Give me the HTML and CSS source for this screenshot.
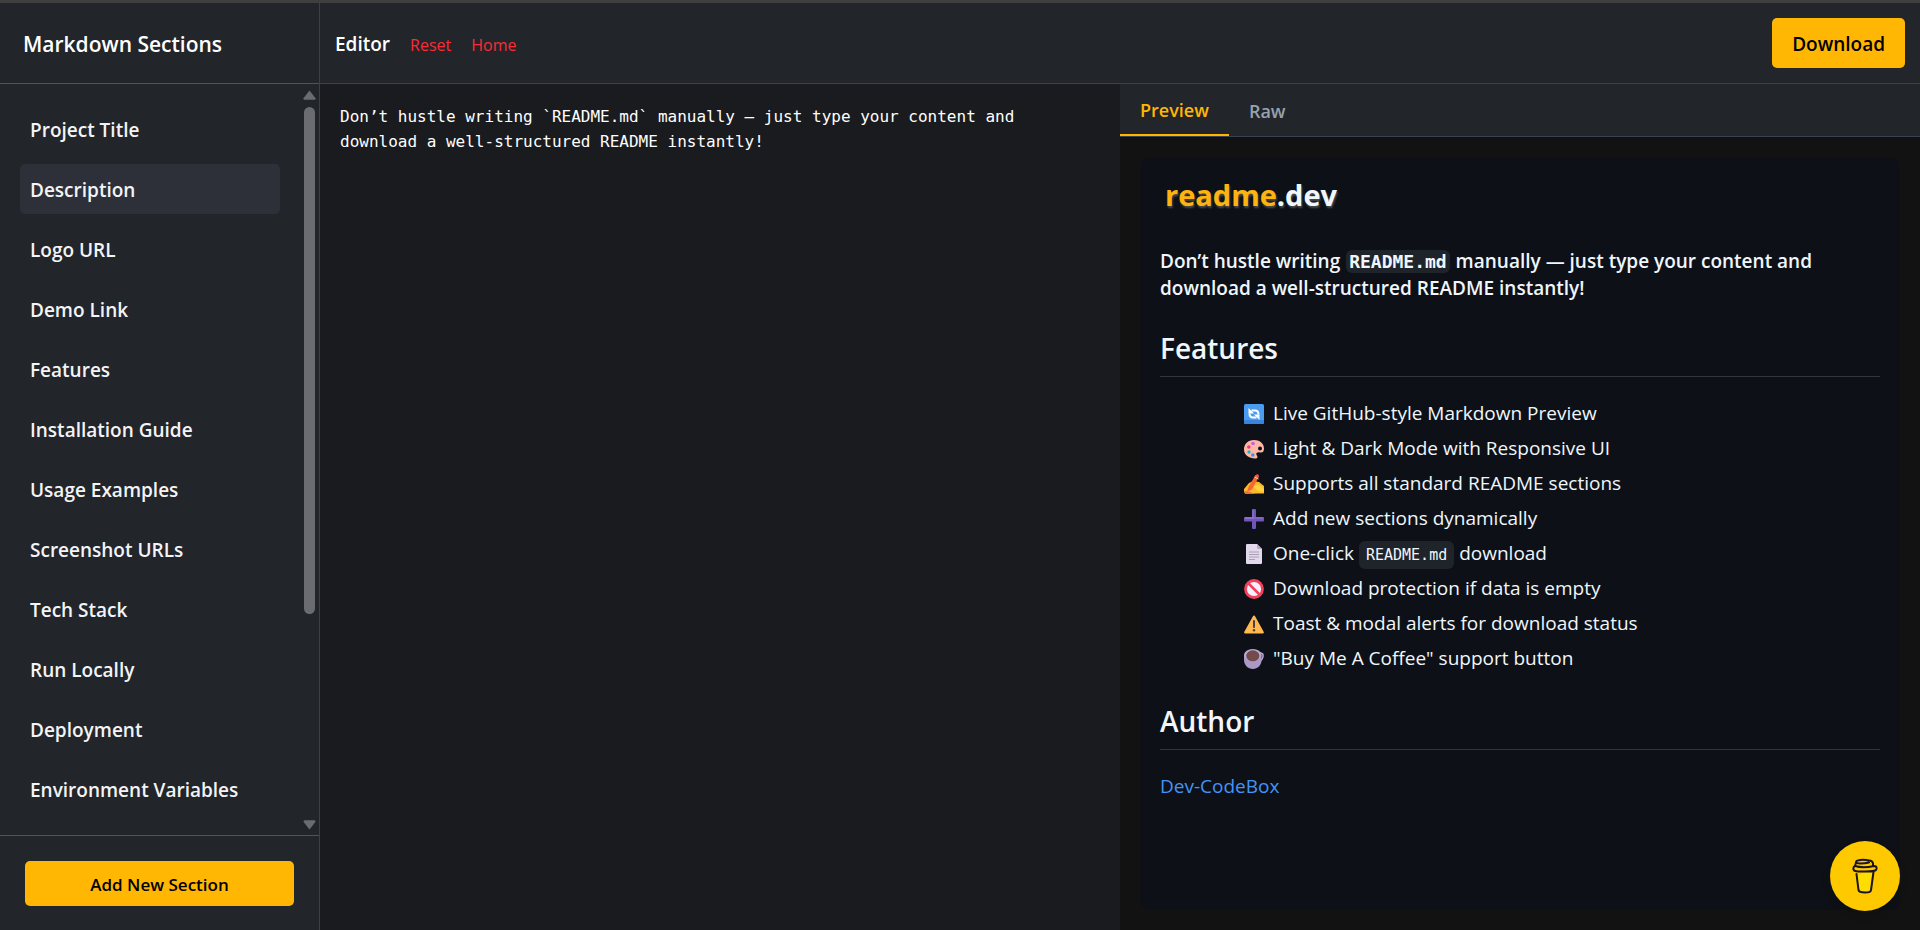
FILE: index.html
```html
<!DOCTYPE html>
<html lang="en">
<head>
<meta charset="utf-8">
<title>readme.dev – Markdown Editor</title>
<link rel="stylesheet" href="styles.css">
</head>
<body>
<div class="app">
  <aside class="sidebar">
    <h1 class="sidebar-title">Markdown Sections</h1>
    <div class="section-area">
      <nav class="section-list" aria-label="Sections">
        <button class="section-item">Project Title</button>
        <button class="section-item active">Description</button>
        <button class="section-item">Logo URL</button>
        <button class="section-item">Demo Link</button>
        <button class="section-item">Features</button>
        <button class="section-item">Installation Guide</button>
        <button class="section-item">Usage Examples</button>
        <button class="section-item">Screenshot URLs</button>
        <button class="section-item">Tech Stack</button>
        <button class="section-item">Run Locally</button>
        <button class="section-item">Deployment</button>
        <button class="section-item">Environment Variables</button>
      </nav>
      <div class="scrollbar" aria-hidden="true">
        <svg width="13" height="10" viewBox="0 0 13 10"><path d="M6.500 0.500L12.500 8.200Q12.500 9.800 11.500 9.800H1.500Q0.500 9.800 0.500 8.200Z"/></svg>
        <div class="track"><div class="thumb"></div></div>
        <svg width="13" height="10" viewBox="0 0 13 10"><path d="M6.500 9.500L12.500 1.800Q12.500 0.200 11.500 0.200H1.500Q0.500 0.200 0.500 1.800Z"/></svg>
      </div>
    </div>
    <div class="sidebar-footer">
      <button class="add-button">Add New Section</button>
    </div>
  </aside>

  <main class="workspace">
    <header class="toolbar">
      <h2 class="toolbar-title">Editor</h2>
      <button class="toolbar-link">Reset</button>
      <a class="toolbar-link" href="#home">Home</a>
      <button class="download-button">Download</button>
    </header>
    <div class="panes">
      <textarea class="editor" aria-label="Section content" spellcheck="false">Don’t hustle writing `README.md` manually — just type your content and download a well-structured README instantly!</textarea>
      <section class="output">
        <div class="tabs" role="tablist">
          <button class="tab selected" role="tab" aria-selected="true">Preview</button>
          <button class="tab" role="tab" aria-selected="false">Raw</button>
        </div>
        <div class="preview-area">
          <article class="preview">
            <div class="logo"><span class="logo-accent">readme</span>.dev</div>
            <h4 class="lead">Don’t hustle writing <code>README.md</code> manually — just type your content and download a well-structured README instantly!</h4>
            <h2 class="heading">Features</h2>
            <ul class="features">
              <li><svg class="emoji" viewBox="0 0 20 20"><rect width="20" height="20" rx="1.500" fill="#4a9cf0"/><path d="M0 16h20v2.500a1.500 1.500 0 0 1-1.500 1.500h-17a1.500 1.500 0 0 1-1.500-1.500z" fill="#3b82dc"/><path d="M7.500 6.500h3.500q3.500 0 3.500 4M12.500 13.500h-3.500q-3.500 0-3.500-4" fill="none" stroke="#fff" stroke-width="2"/><path d="M4.500 4v5.500h5.500zM15.500 16v-5.500h-5.500z" fill="#fff"/></svg>Live GitHub-style Markdown Preview</li>
              <li><svg class="emoji" viewBox="0 0 20 20"><path fill-rule="evenodd" d="M10 1C4 1 0 5 0 10.500S5 19.500 11 19.500c3 0 3-2 1.500-3.500-1-2 1-3 3.500-2.500 3 .500 4-1.500 4-4C19.800 4 15.500 1 10 1zM16 7.500a2 2 0 1 1 0 4 2 2 0 0 1 0-4z" fill="#ffb8a6"/><circle cx="9" cy="4.500" r="1.800" fill="#c45cf0"/><circle cx="4.800" cy="8" r="1.800" fill="#f03a78"/><circle cx="5" cy="13" r="1.700" fill="#22b5b5"/><circle cx="8.800" cy="16" r="1.700" fill="#3f8cf5"/></svg>Light &amp; Dark Mode with Responsive UI</li>
              <li><svg class="emoji" viewBox="0 0 20 20"><path d="M0 15l5-6 4-2 6 1 5 4v7.500H9l-9-1z" fill="#fcb92c"/><path d="M9 12l6-1 5 4v3l-6-1z" fill="#ffd23b"/><path d="M0 17l6 1 6 2H1z" fill="#e9722f"/><path d="M11.500 1l3.500 1.500-7 13-5 2.500 1.500-5z" fill="#f26a31"/><path d="M11.500 1.500Q12.500-.5 14.500 .500L15 3l-3.500-1z" fill="#f84855"/><path d="M10.500 3l4 2" stroke="#f9c7b0"/></svg>Supports all standard README sections</li>
              <li><svg class="emoji" viewBox="0 0 20 20"><path d="M8.500 0h2.500q1 0 1 1v7h7q1 0 1 1v2.500q0 1-1 1h-7v6.500q0 1-1 1H9q-1 0-1-1v-6.500H1q-1 0-1-1V9q0-1 1-1h7V1q0-1 .500-1z" fill="#7254bd"/><path d="M9 1v8H1h18" fill="none" stroke="#917bc9"/></svg>Add new sections dynamically</li>
              <li><svg class="emoji" viewBox="0 0 20 20"><path d="M3 0h10l5 5v14q0 1-1 1H3q-1 0-1-1V1q0-1 1-1z" fill="#e3d9ec"/><path d="M13 0v4q0 1 1 1h4z" fill="#b8a9c8"/><path d="M5 8h10M5 10.500h10M5 13h10M5 15.500h6" stroke="#aaa0b4"/></svg>One-click <code>README.md</code> download</li>
              <li><svg class="emoji" viewBox="0 0 20 20"><circle cx="10" cy="10" r="8.500" fill="#f9effa" stroke="#f3415b" stroke-width="2.800"/><path d="M4 4l12 12" stroke="#f3415b" stroke-width="2.500"/></svg>Download protection if data is empty</li>
              <li><svg class="emoji" viewBox="0 0 20 20"><path d="M10 1.500Q10.800 1.500 11.200 2.500L19.800 18Q20.200 19.300 19 19.500H1Q-.2 19.300.2 18L8.800 2.500Q9.200 1.500 10 1.500z" fill="#ffb94e"/><path d="M10 7v6" stroke="#4a4048" stroke-width="2" stroke-linecap="round"/><circle cx="10" cy="16.300" r="1.200" fill="#4a4048"/></svg>Toast &amp; modal alerts for download status</li>
              <li><svg class="emoji" viewBox="0 0 20 20"><path d="M16 4q3.500 0 3 3.500-.5 3.500-4 5" fill="none" stroke="#b4a3cb" stroke-width="1.600"/><path d="M0 6v5c0 5 4 9 8.800 9s8.800-4 8.800-9V6z" fill="#aa98c6"/><ellipse cx="8.800" cy="6" rx="8.800" ry="6" fill="#b9abd0"/><ellipse cx="8.800" cy="6.800" rx="6.600" ry="5.500" fill="#744b4d"/></svg>"Buy Me A Coffee" support button</li>
            </ul>
            <h2 class="heading">Author</h2>
            <p class="author"><a href="#author">Dev-CodeBox</a></p>
          </article>
        </div>
      </section>
    </div>
  </main>
</div>
<a class="coffee" href="#coffee" aria-label="Buy me a coffee">
  <svg width="26" height="36" viewBox="0 0 26 36" fill="none" stroke="#1a1423" stroke-width="2" stroke-linecap="round" stroke-linejoin="round"><path d="M5 17l15-4-1 17-2 3H8z" fill="#fd0" stroke="none"/><path d="M17 2.500C11 1 4 2 4 4s8 1.500 13 .500M18 2.500q2.500.300 3 3v2.500M4 4.500L3 8"/><path d="M3 8C1.500 8.500 1.200 10 1.500 11.500 2 14 7 13.500 13 13.500s11 0 11.500-2.500c.3-2-.5-3-2.500-3C15 9.500 8 9.500 3 8z"/><path d="M4.500 16L6.500 32q.500 2.500 6.500 2.500T19 32L21.500 14"/></svg>
</a>
</body>
</html>
```

FILE: styles.css
```css
* { box-sizing: border-box; }

body {
  margin: 0;
  background: #121212;
  color: #fff;
  font-family: "Open Sans", "Noto Sans", sans-serif;
  font-size: 19px;
}

h1, h2, h4, p, ul { margin: 0; padding: 0; }

button {
  font: inherit;
  color: inherit;
  background: none;
  border: 0;
  padding: 0;
  cursor: pointer;
}

code { font-family: "DejaVu Sans Mono", monospace; }

.app {
  display: flex;
  height: 100vh;
  border-top: 3px solid #3f3f3f;
}

/* Sidebar */
.sidebar {
  display: flex;
  flex-direction: column;
  flex: 0 0 320px;
  background: #22252a;
  border-right: 1px solid #374151;
}

.sidebar-title {
  display: flex;
  align-items: center;
  height: 81px;
  padding: 2px 0 0 23px;
  border-bottom: 1px solid #4b5563;
  font-size: 21px;
  font-weight: 600;
}

.section-area {
  display: flex;
  flex: 1;
  min-height: 0;
}

.section-list {
  display: flex;
  flex-direction: column;
  flex: 1;
  gap: 10px;
  padding: 20px;
  overflow: hidden;
}

.section-item {
  flex: none;
  height: 50px;
  padding: 2px 10px 0;
  border-radius: 5px;
  color: #f3f4f6;
  font-weight: 600;
  text-align: left;
}

.section-item.active { background: #2d3038; }

.scrollbar {
  display: flex;
  flex-direction: column;
  align-items: center;
  width: 19px;
  padding: 6px 0 5px;
  fill: #6b6c70;
}

.track { flex: 1; padding: 7px 0 9px; }

.thumb {
  width: 11px;
  height: 72%;
  border-radius: 6px;
  background: #6b6c70;
}

.sidebar-footer {
  padding: 25px 25px 24px;
  border-top: 1px solid #4b5563;
}

.add-button {
  width: 100%;
  height: 45px;
  padding-top: 2px;
  border-radius: 5px;
  background: #ffb703;
  color: #000;
  font-size: 17px;
  font-weight: 600;
}

/* Workspace */
.workspace {
  display: flex;
  flex-direction: column;
  flex: 1;
  min-width: 0;
}

.toolbar {
  display: flex;
  align-items: center;
  gap: 20px;
  height: 81px;
  padding: 0 15px;
  background: #22252a;
  border-bottom: 1px solid #374151;
}

.toolbar-title {
  padding-top: 2px;
  font-size: 19px;
  font-weight: 600;
}

.toolbar-link {
  padding-top: 3px;
  color: #fb2c36;
  font-size: 16px;
  text-decoration: none;
}

.download-button {
  height: 50px;
  margin-left: auto;
  padding: 2px 20px 0;
  border-radius: 5px;
  background: #ffb703;
  color: #000;
  font-weight: 600;
}

.panes {
  display: flex;
  flex: 1;
  min-height: 0;
}

.editor {
  flex: 0 0 50%;
  padding: 20px;
  border: 0;
  outline: 0;
  resize: none;
  background: #1a1b1e;
  color: #fff;
  font-family: "DejaVu Sans Mono", monospace;
  font-size: 16px;
  line-height: 25px;
}

.output {
  display: flex;
  flex-direction: column;
  flex: 1;
  min-width: 0;
}

.tabs {
  display: flex;
  height: 53px;
  background: #22252a;
  border-bottom: 1px solid #374151;
}

.tab {
  padding: 2px 20px 0;
  color: #99a1af;
  font-size: 18px;
  font-weight: 600;
}

.tab.selected {
  border-bottom: 2px solid #ffb703;
  color: #ffb703;
}

.preview-area {
  flex: 1;
  min-height: 0;
  padding: 20px;
}

.preview {
  height: 100%;
  padding: 20px;
  overflow: hidden;
  border-radius: 10px;
  background: #0d1117;
  color: #f0f6fc;
}

.logo {
  height: 71px;
  padding-left: 5px;
  font-size: 29px;
  font-weight: 700;
  line-height: 36px;
  text-shadow: 1px 2px 2px #4b4b4b;
}

.logo-accent { color: #ffb30f; }

.lead {
  margin-bottom: 27px;
  font-weight: 600;
  line-height: 27px;
}

.lead code {
  margin: 0 1px;
  padding: 1px 3px;
  border-radius: 6px;
  background: #1e242a;
  font-size: 18px;
}

.heading {
  margin-bottom: 19px;
  padding-bottom: 9px;
  border-bottom: 1px solid #30363d;
  font-size: 28px;
  font-weight: 600;
  line-height: 38px;
}

.features {
  margin-bottom: 26px;
  padding-left: 84px;
  list-style: none;
}

.features li { height: 35px; line-height: 35px; }

.features code {
  padding: 5px 7px;
  border-radius: 6px;
  background: #1e242a;
  font-size: 15px;
}

.emoji {
  width: 20px;
  height: 20px;
  margin-right: 9px;
  vertical-align: -4px;
}

.author { line-height: 34px; }

.author a { color: #4493f8; text-decoration: none; }

.coffee {
  position: fixed;
  right: 20px;
  bottom: 19px;
  display: grid;
  place-items: center;
  width: 70px;
  height: 70px;
  border-radius: 50%;
  background: #ffc900;
  box-shadow: 0 4px 8px #00000026;
}
```
